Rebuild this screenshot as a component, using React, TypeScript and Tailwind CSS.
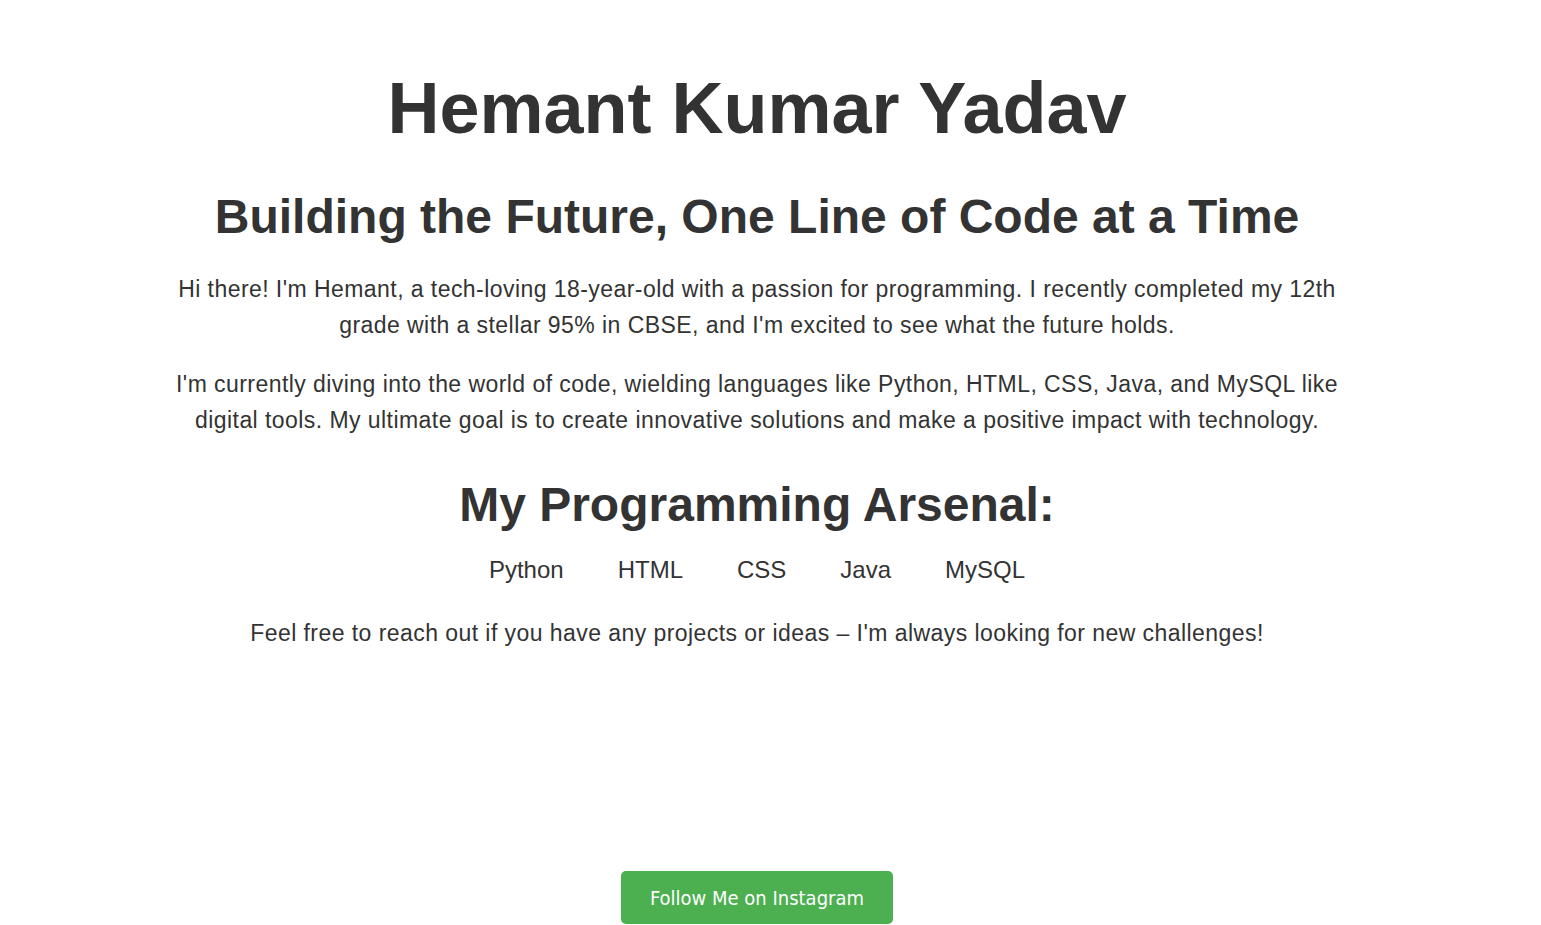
export default function App() {
  return (
    <div className="min-h-[925px] bg-white text-[#333333] pr-[27px]" style={{ fontFamily: '"Liberation Sans", Arial, sans-serif' }}>
      <div className="flex flex-col items-center text-center">
        <h1 className="mt-[72px] text-[72px] leading-[72px] font-bold">Hemant Kumar Yadav</h1>
        <h2 className="mt-[49px] text-[48px] leading-[48px] font-bold">Building the Future, One Line of Code at a Time</h2>
        <p className="mt-[30px] whitespace-nowrap text-[23px] leading-[36px] tracking-[0.44px]">
          Hi there! I'm Hemant, a tech-loving 18-year-old with a passion for programming. I recently completed my 12th
          <br />
          grade with a stellar 95% in CBSE, and I'm excited to see what the future holds.
        </p>
        <p className="mt-[23px] whitespace-nowrap text-[23px] leading-[36px] tracking-[0.44px]">
          I'm currently diving into the world of code, wielding languages like Python, HTML, CSS, Java, and MySQL like
          <br />
          digital tools. My ultimate goal is to create innovative solutions and make a positive impact with technology.
        </p>
        <h2 className="mt-[43px] text-[48px] leading-[48px] font-bold">My Programming Arsenal:</h2>
        <ul className="mt-[24px] flex text-[24px] leading-[33px]">
          {["Python", "HTML", "CSS", "Java", "MySQL"].map((s) => (
            <li key={s} className="px-[27px]">{s}</li>
          ))}
        </ul>
        <p className="mt-[29px] whitespace-nowrap text-[23px] leading-[36px] tracking-[0.44px]">
          Feel free to reach out if you have any projects or ideas – I'm always looking for new challenges!
        </p>
        <button
          className="mt-[220px] h-[53px] w-[272px] rounded-[5px] bg-[#4CAF50] text-[20px] text-white"
          style={{ fontFamily: '"DejaVu Sans Condensed", "DejaVu Sans", sans-serif' }}
        >
          Follow Me on Instagram
        </button>
      </div>
    </div>
  );
}
